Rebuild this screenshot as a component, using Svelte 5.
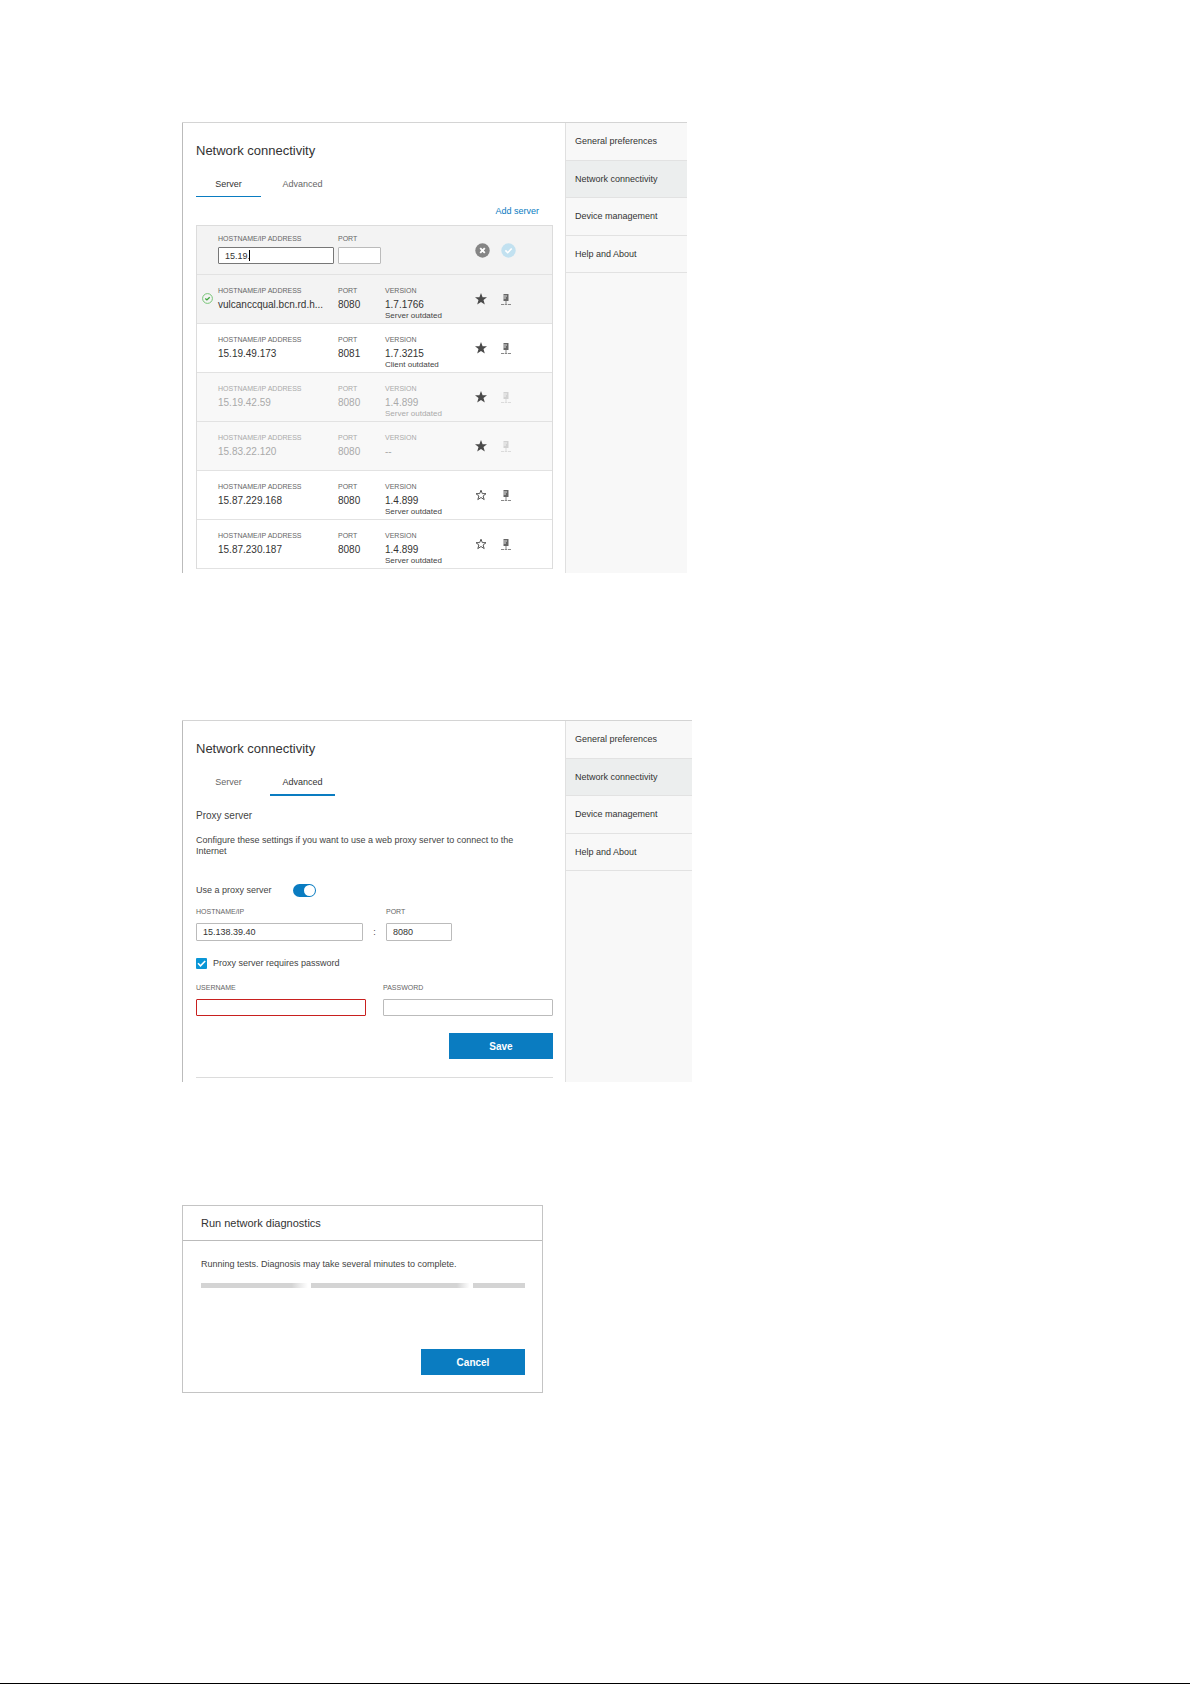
<script>
	const navItems = ['General preferences', 'Network connectivity', 'Device management', 'Help and About'];
	const tabs = ['Server', 'Advanced'];

	const servers = [
		{ host: 'vulcanccqual.bcn.rd.h...', port: '8080', version: '1.7.1766', note: 'Server outdated', starred: true, state: 'connected' },
		{ host: '15.19.49.173', port: '8081', version: '1.7.3215', note: 'Client outdated', starred: true, state: '' },
		{ host: '15.19.42.59', port: '8080', version: '1.4.899', note: 'Server outdated', starred: true, state: 'offline' },
		{ host: '15.83.22.120', port: '8080', version: '--', note: '', starred: true, state: 'offline' },
		{ host: '15.87.229.168', port: '8080', version: '1.4.899', note: 'Server outdated', starred: false, state: '' },
		{ host: '15.87.230.187', port: '8080', version: '1.4.899', note: 'Server outdated', starred: false, state: '' }
	];

	let newHost = $state('15.19.');
	let newPort = $state('');
	let useProxy = $state(true);
	let needsPassword = $state(true);
	let proxyHost = $state('15.138.39.40');
	let proxyPort = $state('8080');
	let username = $state('');
	let password = $state('');
</script>

{#snippet tabBar(active)}
	<h1 class="title">Network connectivity</h1>
	<div class="tabs">
		{#each tabs as tab}
			<button type="button" class="tab" class:active={tab === active}>{tab}</button>
		{/each}
	</div>
{/snippet}

{#snippet sidebar()}
	<nav class="sidebar">
		<ul>
			{#each navItems as item}
				<li class:current={item === 'Network connectivity'}><a href="#settings">{item}</a></li>
			{/each}
		</ul>
	</nav>
{/snippet}

<div class="page">
	<section class="panel servers-panel">
		<div class="main">
			{@render tabBar('Server')}
			<div class="add-row"><a href="#add">Add server</a></div>

			<ul class="server-list">
				<li class="server editing">
					<div class="host">
						<label for="new-host">HOSTNAME/IP ADDRESS</label>
						<div class="input-wrap">
							<input id="new-host" class="focused" type="text" bind:value={newHost} />
							<span class="caret"></span>
						</div>
					</div>
					<div class="port">
						<label for="new-port">PORT</label>
						<input id="new-port" type="text" bind:value={newPort} />
					</div>
					<button type="button" class="icon-btn cancel-edit" aria-label="Cancel">
						<svg width="15" height="15" viewBox="0 0 15 15">
							<circle cx="7.5" cy="7.5" r="7.2" fill="#858585" />
							<path d="M5.2 5.2l4.6 4.6M9.8 5.2L5.2 9.8" stroke="#fff" stroke-width="1.9" />
						</svg>
					</button>
					<button type="button" class="icon-btn" aria-label="Confirm">
						<svg width="15" height="15" viewBox="0 0 15 15">
							<circle cx="7.5" cy="7.5" r="7.2" fill="#c2e1f0" />
							<path d="M4.4 7.4l2.3 2.3 4-4.2" fill="none" stroke="#fff" stroke-width="1.6" />
						</svg>
					</button>
				</li>

				{#each servers as server}
					<li class="server {server.state}">
						{#if server.state === 'connected'}
							<svg class="status" width="11" height="11" viewBox="0 0 11 11">
								<circle cx="5.5" cy="5.5" r="4.9" fill="none" stroke="#6abf6a" stroke-width=".9" />
								<path d="M3.3 5.4l1.6 1.5 2.8-2.7" fill="none" stroke="#3fa63f" stroke-width="1.4" />
							</svg>
						{/if}
						<div class="host">
							<span class="label">HOSTNAME/IP ADDRESS</span>
							<span class="value">{server.host}</span>
						</div>
						<div class="port">
							<span class="label">PORT</span>
							<span class="value">{server.port}</span>
						</div>
						<div class="version">
							<span class="label">VERSION</span>
							<span class="value">{server.version}</span>
							<span class="note">{server.note}</span>
						</div>
						<button type="button" class="icon-btn star" aria-label="Favourite">
							<svg width="12" height="12" viewBox="0 0 12 12">
								{#if server.starred}
									<path d="M6 0l1.6 4.2 4.4.1-3.5 2.8 1.3 4.4L6 9 2.2 11.5l1.3-4.4L0 4.3l4.4-.1z" fill="#4a4a4a" />
								{:else}
									<path d="M6 1.2l1.3 3.4 3.7.1-2.9 2.3 1.1 3.6L6 8.5l-3.2 2.1 1.1-3.6L1 4.7l3.7-.1z" fill="#fff" stroke="#555" />
								{/if}
							</svg>
						</button>
						<button type="button" class="icon-btn machine" aria-label="Diagnostics">
							<svg width="10" height="11" viewBox="0 0 10 11">
								<path d="M2.5 0h5v7h-5z" fill="#666" />
								<path d="M2.5 2h3.5M2.5 4h2.5" stroke="#fff" stroke-width=".8" />
								<path d="M5 7v3" stroke="#888" />
								<path d="M0 10.5h3.3M4 10.5h2M6.8 10.5H10" stroke="#888" />
							</svg>
						</button>
					</li>
				{/each}
			</ul>
		</div>
		{@render sidebar()}
	</section>

	<section class="panel proxy-panel">
		<div class="main">
			{@render tabBar('Advanced')}
			<form>
				<h2>Proxy server</h2>
				<p class="intro">
					Configure these settings if you want to use a web proxy server to connect to the Internet
				</p>

				<div class="toggle-row">
					<label for="use-proxy">Use a proxy server</label>
					<input id="use-proxy" class="toggle" type="checkbox" role="switch" bind:checked={useProxy} />
				</div>

				<div class="address-row">
					<div class="field proxy-host">
						<label for="proxy-host">HOSTNAME/IP</label>
						<input id="proxy-host" type="text" bind:value={proxyHost} />
					</div>
					<span class="colon">:</span>
					<div class="field proxy-port">
						<label for="proxy-port">PORT</label>
						<input id="proxy-port" type="text" bind:value={proxyPort} />
					</div>
				</div>

				<div class="check-row">
					<span class="checkbox">
						<input id="needs-password" type="checkbox" bind:checked={needsPassword} />
						<svg width="11" height="11" viewBox="0 0 11 11">
							<path d="M2 5.3l2.5 2.5L9.2 3" fill="none" stroke="#fff" stroke-width="1.6" />
						</svg>
					</span>
					<label for="needs-password">Proxy server requires password</label>
				</div>

				<div class="login-row">
					<div class="field">
						<label for="username">USERNAME</label>
						<input id="username" class="invalid" type="text" bind:value={username} />
					</div>
					<div class="field">
						<label for="password">PASSWORD</label>
						<input id="password" type="password" bind:value={password} />
					</div>
				</div>

				<div class="actions">
					<button type="button" class="primary">Save</button>
				</div>
				<hr />
			</form>
		</div>
		{@render sidebar()}
	</section>

	<section class="dialog">
		<h2>Run network diagnostics</h2>
		<div class="dialog-body">
			<p>Running tests. Diagnosis may take several minutes to complete.</p>
			<div class="progress" role="progressbar" aria-label="Running tests"></div>
			<div class="actions">
				<button type="button" class="primary">Cancel</button>
			</div>
		</div>
	</section>
</div>

<style>
	:global(body) {
		background: #fff;
	}

	.page {
		box-sizing: border-box;
		min-height: 100vh;
		padding: 122px 24px 0 182px;
		border-bottom: 1px solid #000;
		font-family: 'Liberation Sans', Arial, sans-serif;
		font-size: 9px;
		color: #444;
	}

	.page *,
	.page *::before {
		box-sizing: border-box;
	}

	h1,
	h2,
	p,
	ul {
		margin: 0;
		padding: 0;
		font-weight: normal;
		list-style: none;
	}

	button,
	input {
		font-family: inherit;
		margin: 0;
	}

	a {
		color: inherit;
		text-decoration: none;
	}

	.panel {
		display: grid;
		grid-template-columns: 383px 1fr;
		border-top: 1px solid #d4d4d4;
	}

	.servers-panel {
		max-width: 505px;
		margin-bottom: 147px;
	}

	.proxy-panel {
		max-width: 510px;
		margin-bottom: 123px;
	}

	.main {
		padding: 18px 12px 4px 13px;
		border-left: 1px solid #bbb;
	}

	.title {
		font-size: 13px;
		line-height: 20px;
		color: #333;
	}

	.tabs {
		display: flex;
		gap: 9px;
		margin-top: 13px;
	}

	.tab {
		width: 65px;
		padding: 0 0 2px;
		border: none;
		border-bottom: 1px solid transparent;
		background: none;
		font-size: 9px;
		line-height: 20px;
		color: #666;
	}

	.tab.active {
		border-bottom-color: #0a7cc1;
		color: #333;
	}

	.proxy-panel .tab {
		border-bottom-width: 2px;
	}

	.add-row {
		margin: 4px 14px 4px 0;
		text-align: right;
		line-height: 20px;
		color: #0a7cc1;
	}

	/* server list */
	.server-list {
		border: 1px solid #dcdcdc;
		border-bottom: none;
	}

	.server {
		position: relative;
		display: grid;
		grid-template-columns: 120px 47px 90px 26px 26px;
		height: 49px;
		padding-left: 21px;
		border-bottom: 1px solid #e2e2e2;
	}

	.server.editing,
	.server.connected {
		background: #f3f3f3;
	}

	.server.offline {
		background: #f8f8f8;
	}

	.server.offline .label,
	.server.offline .value,
	.server.offline .note {
		color: #aaa;
	}

	.server.offline .machine {
		opacity: 0.25;
	}

	.host,
	.port,
	.version {
		display: flex;
		flex-direction: column;
		min-width: 0;
		padding-top: 11px;
	}

	.editing .host,
	.editing .port {
		padding: 8px 4px 0 0;
	}

	.editing input {
		width: 100%;
		height: 17px;
		margin-top: 3px;
	}

	label,
	.label {
		font-size: 7px;
		line-height: 10px;
		color: #666;
	}

	.value {
		margin-top: 3px;
		white-space: nowrap;
		font-size: 10px;
		line-height: 12px;
		color: #333;
	}

	.note {
		font-size: 8px;
		line-height: 9px;
		white-space: nowrap;
	}

	.status {
		position: absolute;
		left: 5px;
		top: 18px;
	}

	.icon-btn {
		display: flex;
		align-items: center;
		justify-content: flex-start;
		padding: 0;
		border: none;
		background: none;
	}

	.icon-btn svg {
		flex: none;
	}

	.cancel-edit {
		grid-column: 4;
	}

	input[type='text'],
	input[type='password'] {
		padding: 0 6px;
		border: 1px solid #bbb;
		border-radius: 1px;
		background: #fff;
		font-size: 9px;
		color: #333;
		outline: none;
	}

	input[type='text'].focused {
		border-color: #777;
	}

	input[type='text'].invalid {
		border-color: #c8201f;
	}

	.input-wrap {
		position: relative;
	}

	.caret {
		position: absolute;
		left: 31px;
		top: 6px;
		width: 1px;
		height: 11px;
		background: #000;
	}

	/* sidebar */
	.sidebar {
		border-left: 1px solid #e0e0e0;
		background: #f8f8f8;
	}

	.sidebar ul {
		display: grid;
		grid-auto-rows: 1fr;
		height: 150px;
	}

	.sidebar li {
		display: flex;
		align-items: center;
		padding-left: 9px;
		border-bottom: 1px solid #e2e2e2;
		color: #333;
	}

	.sidebar li.current {
		background: #eceeee;
	}

	/* proxy settings */
	form h2 {
		margin-top: 10px;
		font-size: 10px;
		line-height: 20px;
	}

	.intro {
		margin-top: 9px;
		padding-right: 14px;
		line-height: 11px;
	}

	.toggle-row {
		display: flex;
		align-items: center;
		gap: 18px;
		height: 20px;
		margin-top: 23px;
	}

	.toggle-row label {
		min-width: 79px;
		font-size: 9px;
		color: #444;
	}

	.toggle {
		appearance: none;
		position: relative;
		width: 23px;
		height: 13px;
		border-radius: 7px;
		background: #aaa;
	}

	.toggle::before {
		content: '';
		position: absolute;
		top: 1px;
		left: 1px;
		width: 11px;
		height: 11px;
		border-radius: 50%;
		background: #fff;
	}

	.toggle:checked {
		background: #0a7cc1;
	}

	.toggle:checked::before {
		left: 11px;
	}

	.address-row {
		display: flex;
		margin-top: 7px;
	}

	.field {
		display: flex;
		flex-direction: column;
		gap: 6px;
	}

	.field input {
		width: 100%;
		height: 18px;
	}

	.proxy-host {
		width: 167px;
	}

	.proxy-port {
		width: 66px;
	}

	.colon {
		align-self: flex-end;
		width: 23px;
		line-height: 18px;
		text-align: center;
	}

	.check-row {
		display: flex;
		align-items: center;
		gap: 6px;
		height: 20px;
		margin-top: 12px;
	}

	.check-row label {
		font-size: 9px;
		color: #444;
	}

	.checkbox {
		display: grid;
	}

	.checkbox input,
	.checkbox svg {
		grid-area: 1 / 1;
	}

	.checkbox svg {
		pointer-events: none;
	}

	.checkbox input {
		appearance: none;
		width: 11px;
		height: 11px;
		border-radius: 1px;
		background: #ccc;
	}

	.checkbox input:checked {
		background: #0a96d6;
	}

	.login-row {
		display: grid;
		grid-template-columns: 1fr 1fr;
		gap: 17px;
		margin-top: 10px;
	}

	.login-row input {
		height: 17px;
	}

	.actions {
		display: flex;
		justify-content: flex-end;
		margin-top: 17px;
	}

	.primary {
		width: 104px;
		height: 26px;
		padding: 0;
		border: none;
		background: #0a7cc1;
		font-size: 10px;
		font-weight: bold;
		color: #fff;
	}

	hr {
		margin: 18px 0 0;
		border: none;
		border-top: 1px solid #dcdcdc;
	}

	/* diagnostics dialog */
	.dialog {
		max-width: 361px;
		border: 1px solid #c4c4c4;
	}

	.dialog h2 {
		padding-left: 18px;
		border-bottom: 1px solid #bbb;
		font-size: 11px;
		line-height: 34px;
		color: #333;
	}

	.dialog-body {
		padding: 13px 17px 17px 18px;
	}

	.dialog-body p {
		line-height: 20px;
	}

	.progress {
		height: 5px;
		margin-top: 9px;
		background: linear-gradient(
			to right,
			#d4d4d4 28%,
			#fff 33% 34%,
			#d4d4d4 34% 79%,
			#fff 83% 84%,
			#d4d4d4 84%
		);
	}

	.dialog .actions {
		margin-top: 61px;
	}
</style>
